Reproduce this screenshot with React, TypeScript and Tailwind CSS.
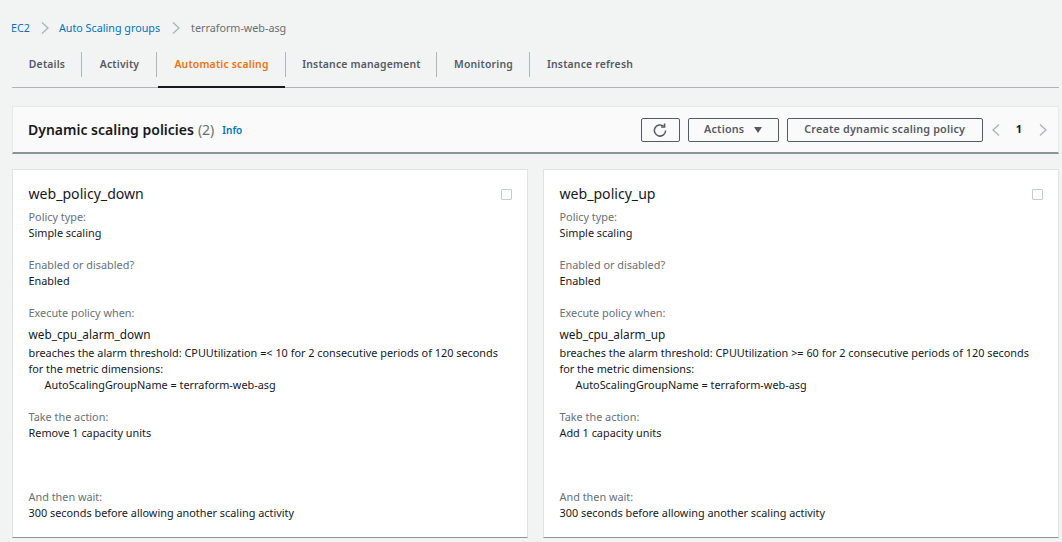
const font = { fontFamily: '"Noto Sans", sans-serif' };

const tabs = [
  { name: "Details", w: "w-[70px]" },
  { name: "Activity", w: "w-[75px]" },
  { name: "Automatic scaling", w: "w-[129px]", active: true },
  { name: "Instance management", w: "w-[151px]" },
  { name: "Monitoring", w: "w-[93px]" },
  { name: "Instance refresh", w: "w-[120px]" },
];

const Chevron = ({ dir = "right", className = "" }: { dir?: "left" | "right"; className?: string }) => (
  <svg width="8" height="12" viewBox="0 0 8 12" fill="none" stroke="#aab7b8" strokeWidth="1.4" className={className}>
    <path d={dir === "right" ? "M1 .6 7 6l-6 5.4" : "M7 .6 1 6l6 5.4"} />
  </svg>
);

const Field = ({ label, value, className = "" }: { label: string; value: string; className?: string }) => (
  <div className={className}>
    <div className="text-[#687078] h-4 leading-4">{label}</div>
    <div className="text-[#16191f] h-4 leading-4">{value}</div>
  </div>
);

const PolicyCard = ({ name, alarm, op, action }: { name: string; alarm: string; op: string; action: string }) => (
  <div className="h-[369px] bg-white border-t border-x border-[#dfe3e3] border-b border-b-[#879596] pl-[15.5px] pr-[15.5px] relative text-[10.87px]">
    <div className="pt-[15px] h-[39px] text-[14.1px] leading-[18px] text-[#16191f]">{name}</div>
    <div className="absolute right-[15px] top-[19px] w-[11px] h-[11px] border border-[#c5cccc] rounded-[1px]" />
    <Field label="Policy type:" value="Simple scaling" />
    <Field label="Enabled or disabled?" value="Enabled" className="mt-4" />
    <div className="mt-4">
      <div className="text-[#687078] h-4 leading-4">Execute policy when:</div>
      <div className="text-[#16191f] text-[11.8px] leading-4 mt-[5px]">{alarm}</div>
      <div className="text-[#16191f] leading-4 mt-[3px]">
        breaches the alarm threshold: CPUUtilization {op} for 2 consecutive periods of 120 seconds
      </div>
      <div className="text-[#16191f] leading-4">for the metric dimensions:</div>
      <div className="text-[#16191f] leading-4 pl-4">AutoScalingGroupName = terraform-web-asg</div>
    </div>
    <Field label="Take the action:" value={action} className="mt-4" />
    <Field label="And then wait:" value="300 seconds before allowing another scaling activity" className="mt-[48px]" />
  </div>
);

export default function App() {
  return (
    <div style={font} className="w-[1062px] h-[542px] overflow-hidden bg-[#f2f3f3] pl-[12px] pr-[3px]">
      <div className="flex items-center h-[56px] -ml-[1px] text-[10.75px] text-[#0073bb]">
        <span>EC2</span>
        <Chevron className="ml-[11px] mr-[10px]" />
        <span>Auto Scaling groups</span>
        <Chevron className="ml-[12px] mr-[11px]" />
        <span className="text-[#687078]">terraform-web-asg</span>
      </div>
      <div className="flex h-[33px] border-b border-[#aab7b8] -mt-[1px]">
        {tabs.map((t, i) => (
          <div
            key={t.name}
            className={`relative flex items-start justify-center text-[10.4px] font-semibold tracking-[0.2px] ${t.w} ${
              t.active ? "text-[#ec7211]" : "text-[#545b64]"
            }`}
          >
            <span className="leading-4 mt-[1px]">{t.name}</span>
            {i < tabs.length - 1 && <div className="absolute right-0 -top-[3px] w-px h-[25px] bg-[#aab7b8]" />}
            {t.active && <div className="absolute left-[1px] right-[1px] -bottom-px h-[2px] bg-[#16191f]" />}
          </div>
        ))}
      </div>
      <div className="mt-[18px] h-[48px] bg-[#fafafa] border-t border-x border-[#e6e9e9] border-b-2 border-b-[#879596] flex items-center pl-[15px] pr-[11px]">
        <span className="text-[14px] font-semibold text-[#16191f]">Dynamic scaling policies</span>
        <span className="text-[14px] text-[#687078] ml-[4px]">(2)</span>
        <span className="text-[10px] font-semibold text-[#0073bb] ml-[8px] mt-[2px]">Info</span>
        <div className="ml-auto flex items-center">
          <button className="w-[39px] h-[24px] border border-[#545b64] rounded-[2px] flex items-center justify-center">
            <svg width="14" height="14" viewBox="0 0 14 14" fill="none" stroke="#545b64" strokeWidth="1.5">
              <path d="M12.6 7.5a5.6 5.6 0 1 1-1.9-4.2" />
              <path d="M11.6.6v3.5H8.1" />
            </svg>
          </button>
          <button className="ml-[8px] w-[91px] h-[24px] border border-[#545b64] rounded-[2px] flex items-center justify-center gap-[10px] text-[10.78px] font-semibold tracking-[0.2px] text-[#545b64]">
            Actions
            <svg width="8" height="6" viewBox="0 0 8 6">
              <path d="M0 0h8L4 6z" fill="#545b64" />
            </svg>
          </button>
          <button className="ml-[8px] w-[196px] h-[24px] border border-[#545b64] rounded-[2px] flex items-center justify-center text-[10.78px] font-semibold tracking-[0.2px] text-[#545b64]">
            Create dynamic scaling policy
          </button>
          <Chevron dir="left" className="ml-[9px]" />
          <span className="ml-[16px] text-[11px] font-bold text-[#16191f]">1</span>
          <Chevron className="ml-[17px]" />
        </div>
      </div>
      <div className="mt-[15px] grid grid-cols-[516px_516px] gap-[15px]">
        <PolicyCard name="web_policy_down" alarm="web_cpu_alarm_down" op="=< 10" action="Remove 1 capacity units" />
        <PolicyCard name="web_policy_up" alarm="web_cpu_alarm_up" op=">= 60" action="Add 1 capacity units" />
      </div>
    </div>
  );
}
